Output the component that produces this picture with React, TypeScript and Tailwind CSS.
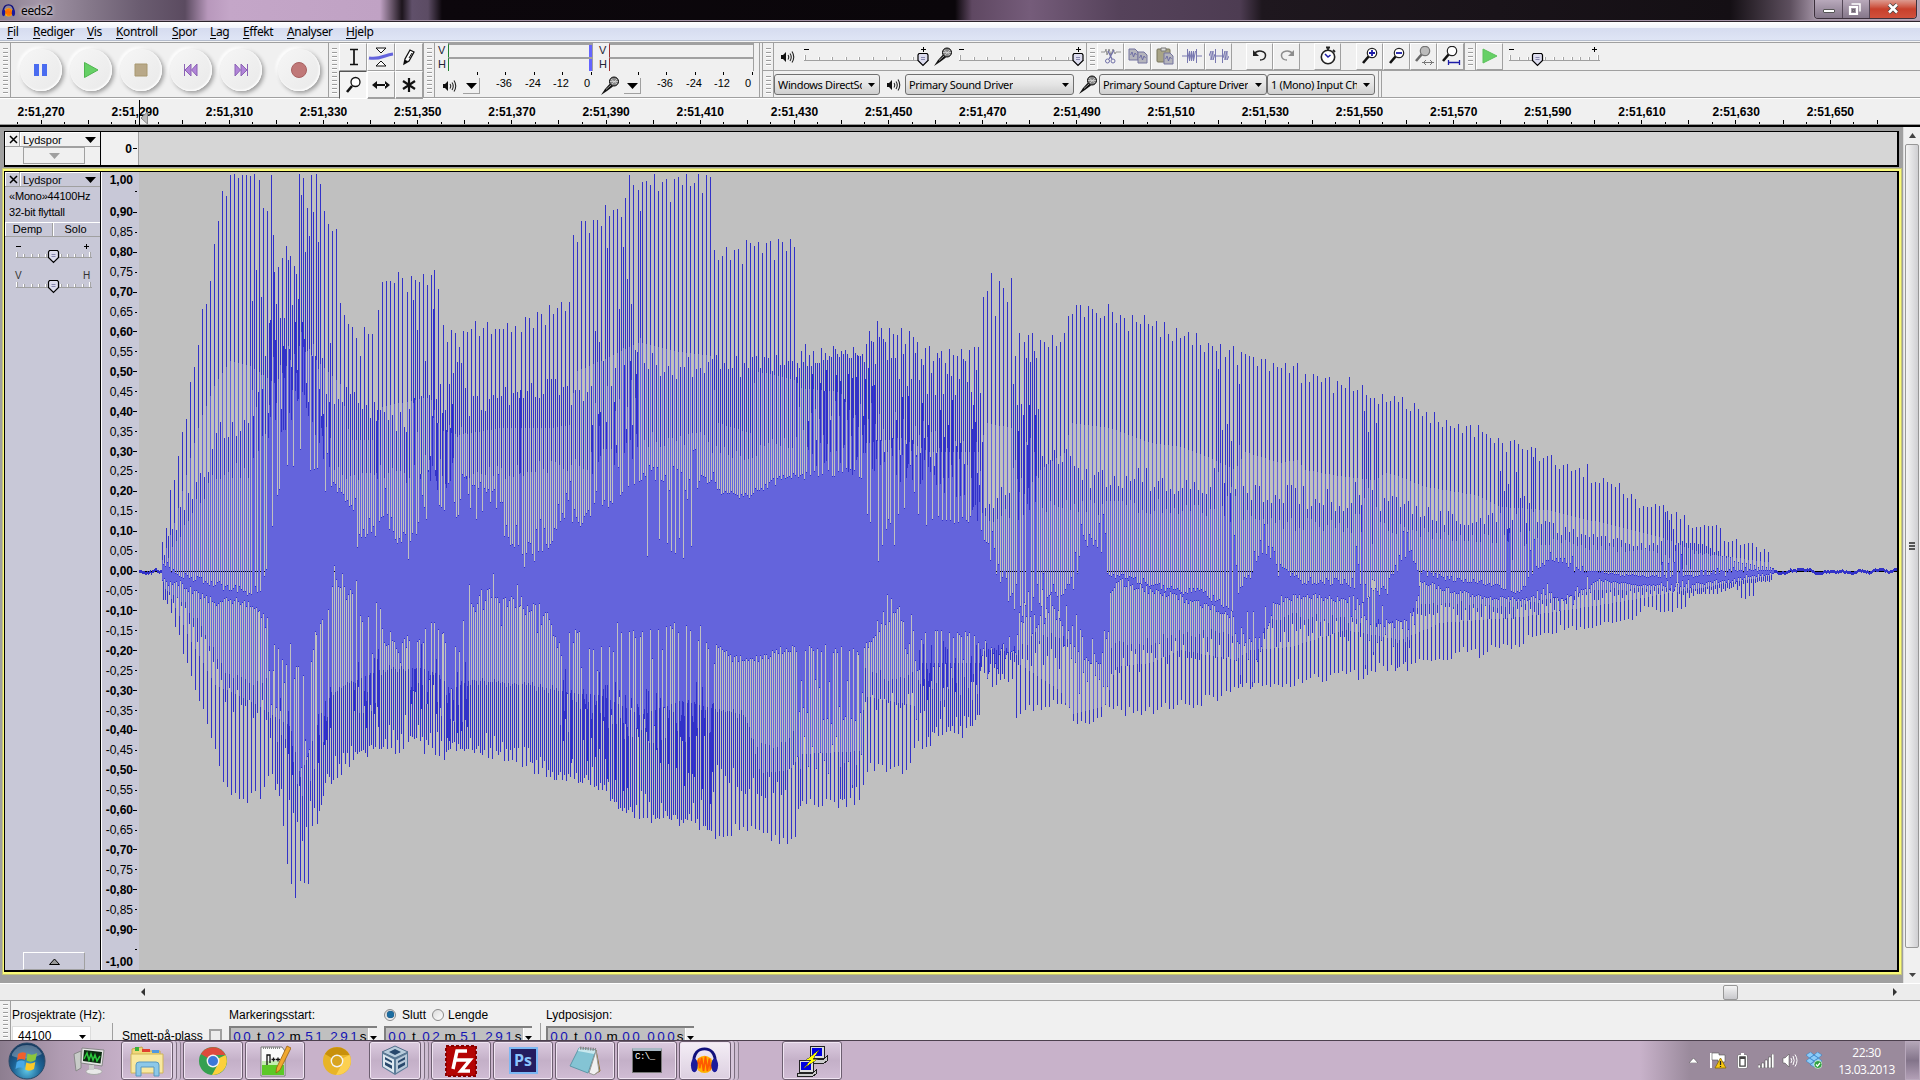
import React from "react";

type Pt = [number, number];
type Child = { children?: React.ReactNode };

const ZERO = 571;

/* Peak tops, one value for each 4px cycle, grouped by the x where a run starts. */
const PEAKS: { x: number; v: number[] }[] = [
  { x: 162, v: [542, 528, 490, 480, 456, 432, 419, 382, 367, 345, 309, 304, 281, 244, 221, 191, 196, 175, 174, 178, 175, 175, 176, 174] },
  { x: 259, v: [180, 208, 211, 175] },
  { x: 274, v: [272, 267, 258, 246, 256, 266] },
  { x: 299, v: [174, 178, 208] },
  { x: 311, v: [175] },
  { x: 316, v: [174, 184, 211, 224, 231] },
  { x: 336, v: [229, 303, 315, 324, 327, 338, 356, 327, 334, 334] },
  { x: 378, v: [310, 282, 281, 281, 283, 272, 278] },
  { x: 407, v: [292, 276, 280, 282, 274, 285, 275] },
  { x: 434, v: [270, 289] },
  { x: 443, v: [325, 342, 330, 333, 347, 331, 332, 329, 321, 336, 328, 322, 334, 329, 329, 329, 323, 332, 326] },
  { x: 521, v: [332, 317, 318, 328, 312, 314, 325, 305, 314, 308, 302, 311, 302, 235, 242, 221, 221, 233, 220, 220, 226, 205, 216, 210, 209] },
  { x: 621, v: [217, 198, 175, 185] },
  { x: 638, v: [190, 182, 181, 185, 174, 191, 182, 179, 202, 179, 177, 185, 174, 186, 183, 174, 193, 175, 177, 250, 260, 256, 247, 260, 250, 249, 264, 240, 243, 246, 242, 253, 243, 241, 260, 239, 242, 251, 239, 247] },
  { x: 797, v: [363, 351, 344, 355, 351, 363, 348, 353, 356, 346, 354, 351, 350, 358, 347] },
  { x: 858, v: [356, 354, 344] },
  { x: 869, v: [331, 342, 321, 328, 342, 328, 334, 335, 328, 344, 331, 337, 342, 359, 348, 346, 361, 353, 351, 363, 349, 355, 356, 349, 361, 350] },
  { x: 974, v: [347, 347] },
  { x: 983, v: [297, 291, 273, 316, 281, 288, 302, 278, 356, 333] },
  { x: 1024, v: [342, 335, 333, 358, 340, 342, 347, 335, 346, 342, 333, 316, 314, 305, 305, 317, 306, 309, 313, 318, 316, 304, 312, 323, 315, 318, 331, 315, 322, 324, 315, 324, 326, 321, 337, 322, 334, 341, 328, 338, 336, 332, 345, 333, 345, 352, 343, 346, 351, 344] },
  { x: 1225, v: [357, 350] },
  { x: 1233, v: [346, 365, 352, 354, 356, 357, 366, 359, 359, 371, 363, 367, 368, 363, 373, 366, 363, 383, 374, 382, 374, 376, 382, 378, 377, 393, 381, 385, 388, 377, 391, 390] },
  { x: 1362, v: [385, 395, 398, 398, 404, 394, 402, 401, 396, 402, 397, 409, 411, 403, 409, 416, 412, 423, 412, 422, 427, 420, 426, 428, 424, 433, 426, 425, 437, 425, 432, 434, 438, 443, 438, 443, 452, 441, 440, 444, 449] },
  { x: 1527, v: [450, 447, 448, 461, 458, 456, 455, 465, 469, 465, 464, 471, 470, 468, 477, 464, 483, 482, 483, 478, 482, 484, 487, 483, 494, 498, 494, 499, 508, 506, 507, 507, 504, 506, 505, 511, 514] },
  { x: 1676, v: [512, 519, 515, 525, 528, 527, 527, 525, 526, 526, 525, 528, 541, 542, 541, 539, 545, 544, 543, 543, 547, 552, 549, 552] },
];

/* Second-harmonic tops. */
const SECOND: Pt[] = [[162, 555], [180, 512], [200, 479], [210, 471], [215, 445], [220, 433], [232, 426], [250, 423], [255, 359], [260, 402], [270, 320], [280, 333], [290, 308], [300, 310], [310, 343], [318, 369], [322, 397], [340, 400], [350, 395], [365, 400], [375, 415], [395, 423], [410, 420], [415, 369], [420, 420], [436, 412], [445, 420], [455, 385], [465, 418], [475, 401], [500, 397], [530, 389], [560, 389], [572, 397], [600, 387], [615, 395], [625, 356], [640, 356], [660, 366], [680, 371], [700, 364], [715, 361], [740, 366], [760, 361], [790, 361], [797, 370], [830, 360], [860, 352], [870, 380], [900, 380], [920, 399], [940, 395], [975, 395], [981, 423], [985, 505], [1009, 495], [1012, 419], [1020, 419], [1035, 380], [1042, 452], [1070, 454], [1085, 476], [1120, 476], [1150, 481], [1180, 486], [1235, 490], [1250, 493], [1300, 497], [1350, 502], [1365, 500], [1400, 507], [1440, 517], [1500, 518], [1530, 525], [1550, 527], [1570, 533], [1600, 540], [1640, 545], [1700, 543], [1740, 563], [1773, 568]];
/* Upper end of the falling half cycles. */
const CORE_TOP: Pt[] = [[162, 560], [175, 573], [215, 584], [250, 592], [262, 586], [266, 563], [271, 528], [276, 499], [290, 458], [300, 450], [310, 471], [325, 471], [335, 486], [345, 497], [360, 532], [370, 536], [377, 520], [385, 515], [395, 535], [410, 545], [415, 522], [422, 512], [440, 512], [455, 497], [470, 486], [485, 494], [500, 499], [510, 542], [520, 548], [540, 548], [555, 537], [565, 497], [575, 522], [585, 520], [600, 502], [620, 494], [645, 474], [700, 471], [710, 476], [720, 490], [740, 498], [760, 490], [780, 478], [800, 476], [850, 471], [862, 476], [870, 529], [876, 562], [885, 524], [900, 529], [910, 481], [915, 514], [922, 524], [935, 519], [975, 520], [985, 543], [1000, 577], [1012, 577], [1020, 612], [1040, 603], [1055, 591], [1075, 581], [1083, 538], [1095, 543], [1103, 529], [1108, 577], [1120, 572], [1140, 581], [1180, 591], [1200, 592], [1235, 610], [1247, 570], [1260, 547], [1275, 556], [1282, 567], [1300, 580], [1345, 582], [1360, 590], [1385, 593], [1395, 570], [1405, 547], [1412, 556], [1418, 570], [1440, 577], [1480, 582], [1520, 592], [1535, 570], [1545, 563], [1565, 560], [1580, 570], [1620, 575], [1680, 577], [1740, 570], [1773, 570]];
/* Lower end of the rising half cycles. */
const CORE_BOTTOM: Pt[] = [[162, 583], [185, 586], [200, 596], [215, 603], [230, 600], [255, 606], [262, 618], [275, 650], [285, 660], [290, 650], [300, 675], [310, 670], [315, 634], [325, 609], [330, 583], [340, 588], [355, 599], [365, 629], [372, 590], [378, 600], [385, 645], [400, 645], [415, 637], [425, 627], [437, 632], [450, 650], [466, 650], [468, 583], [470, 614], [480, 594], [520, 604], [545, 614], [560, 650], [575, 634], [590, 645], [600, 648], [615, 634], [660, 636], [680, 629], [705, 639], [730, 658], [760, 658], [780, 651], [800, 648], [840, 649], [860, 653], [870, 643], [880, 620], [900, 610], [905, 643], [920, 634], [945, 634], [975, 636], [981, 648], [1000, 653], [1015, 648], [1020, 620], [1035, 622], [1045, 612], [1055, 615], [1070, 624], [1085, 643], [1100, 648], [1108, 600], [1115, 581], [1140, 588], [1180, 598], [1235, 616], [1247, 640], [1262, 640], [1275, 600], [1300, 596], [1345, 600], [1375, 602], [1390, 625], [1412, 625], [1420, 582], [1450, 590], [1480, 597], [1520, 600], [1535, 597], [1570, 597], [1600, 580], [1640, 586], [1700, 584], [1773, 574]];
/* Second-harmonic bottoms. */
const SECOND_BOTTOM: Pt[] = [[162, 588], [190, 619], [205, 650], [215, 675], [225, 696], [250, 708], [270, 708], [280, 716], [290, 770], [300, 798], [320, 793], [327, 777], [340, 762], [365, 747], [380, 742], [400, 726], [430, 729], [445, 742], [480, 744], [520, 757], [550, 767], [590, 772], [605, 782], [620, 801], [650, 801], [680, 806], [710, 811], [715, 777], [745, 782], [780, 792], [797, 763], [800, 715], [830, 730], [860, 730], [865, 696], [900, 706], [915, 691], [922, 700], [975, 700], [985, 663], [1015, 667], [1035, 653], [1070, 658], [1085, 667], [1140, 663], [1180, 649], [1230, 650], [1250, 643], [1300, 627], [1350, 633], [1380, 630], [1400, 617], [1450, 613], [1530, 613], [1560, 603], [1600, 595], [1700, 592], [1740, 585], [1773, 580]];
/* Deepest bottoms. */
const DEEP: Pt[] = [[162, 594], [175, 624], [184, 657], [192, 675], [200, 703], [208, 726], [215, 747], [219, 772], [227, 790], [240, 803], [252, 798], [265, 790], [270, 767], [280, 803], [285, 851], [290, 880], [293, 898], [297, 900], [300, 882], [308, 882], [312, 828], [320, 818], [325, 782], [340, 770], [350, 762], [365, 749], [396, 752], [412, 739], [425, 749], [442, 757], [452, 747], [465, 749], [490, 754], [510, 759], [530, 767], [560, 780], [590, 780], [605, 795], [625, 810], [645, 821], [680, 821], [703, 828], [719, 836], [735, 828], [760, 832], [782, 840], [795, 842], [797, 808], [810, 804], [862, 801], [864, 768], [900, 770], [913, 765], [915, 734], [925, 751], [935, 730], [955, 737], [970, 730], [980, 715], [983, 677], [1000, 686], [1012, 677], [1016, 713], [1035, 706], [1050, 701], [1065, 703], [1072, 722], [1097, 720], [1105, 710], [1150, 713], [1180, 703], [1192, 704], [1215, 697], [1235, 688], [1260, 688], [1275, 683], [1294, 690], [1300, 678], [1330, 680], [1345, 673], [1365, 677], [1380, 665], [1395, 668], [1411, 668], [1420, 657], [1450, 657], [1470, 648], [1480, 655], [1490, 647], [1520, 647], [1525, 637], [1550, 635], [1560, 628], [1590, 627], [1610, 622], [1635, 618], [1645, 607], [1665, 612], [1685, 607], [1690, 595], [1720, 593], [1735, 585], [1742, 600], [1753, 595], [1757, 582], [1773, 582]];
/* RMS limits. */
const RMS_PEAK: Pt[] = [[162, 560], [175, 520], [190, 458], [200, 420], [215, 384], [230, 361], [250, 366], [275, 384], [300, 344], [325, 369], [340, 384], [350, 440], [375, 440], [380, 407], [430, 397], [440, 430], [460, 435], [500, 428], [550, 428], [570, 425], [575, 372], [600, 361], [640, 342], [680, 352], [710, 356], [718, 423], [750, 433], [755, 371], [795, 380], [800, 388], [840, 392], [866, 443], [900, 438], [930, 452], [980, 452], [985, 423], [1011, 428], [1020, 500], [1040, 470], [1065, 452], [1070, 423], [1110, 428], [1150, 443], [1180, 447], [1215, 460], [1235, 470], [1245, 452], [1280, 463], [1297, 460], [1305, 470], [1345, 477], [1375, 480], [1385, 473], [1400, 477], [1425, 487], [1475, 495], [1500, 507], [1545, 510], [1575, 517], [1620, 527], [1660, 537], [1700, 553], [1773, 563]];
const RMS_SECOND: Pt[] = [[162, 562], [200, 500], [215, 471], [250, 471], [262, 440], [280, 420], [300, 400], [320, 440], [335, 471], [435, 476], [520, 471], [600, 460], [650, 440], [700, 440], [730, 457], [790, 440], [810, 450], [860, 462], [930, 471], [985, 520], [1040, 507], [1180, 507], [1200, 513], [1240, 513], [1300, 525], [1380, 527], [1450, 537], [1530, 540], [1600, 548], [1700, 553], [1773, 566]];
const RMS_DEEP: Pt[] = [[162, 580], [190, 640], [215, 685], [250, 701], [290, 726], [300, 777], [325, 701], [345, 685], [380, 670], [420, 668], [440, 675], [450, 690], [470, 680], [530, 685], [570, 693], [600, 695], [640, 715], [680, 701], [745, 715], [760, 773], [790, 770], [800, 754], [860, 751], [864, 696], [915, 706], [920, 663], [980, 663], [985, 648], [1015, 653], [1020, 665], [1060, 691], [1070, 715], [1105, 706], [1115, 667], [1150, 663], [1180, 650], [1235, 660], [1250, 650], [1290, 647], [1345, 630], [1400, 640], [1440, 623], [1520, 617], [1600, 605], [1700, 588], [1773, 575]];
/* Ranges where neighbouring cycles beat against each other. */
const BEAT_UP: Pt[] = [[252, 330], [412, 466], [590, 640], [797, 980], [1012, 1040], [1212, 1242], [1355, 1378], [1500, 1535], [1660, 1690]];
const BEAT_DOWN: Pt[] = [[268, 330], [352, 380], [410, 470], [560, 712], [797, 862], [915, 980], [1068, 1108], [1235, 1262], [1362, 1412]];
const NOTCHES: Pt[] = [[395, 420], [646, 700], [868, 895], [1083, 1106]];
/* Ranges where the edge of the core stays even. */
const EVEN: Pt[] = [[162, 262], [296, 322], [620, 646], [715, 866], [930, 975], [1112, 1235], [1280, 1350], [1420, 1525], [1590, 1660]];

function at(p: Pt[], x: number) {
  if (x <= p[0][0]) return p[0][1];
  for (let i = 1; i < p.length; i++) {
    if (x <= p[i][0]) {
      const [x0, y0] = p[i - 1];
      const [x1, y1] = p[i];
      return y0 + ((y1 - y0) * (x - x0)) / (x1 - x0);
    }
  }
  return p[p.length - 1][1];
}
const inside = (r: Pt[], x: number) => r.some(([a, b]) => x >= a && x <= b);

function buildWave() {
  let seed = 7;
  const rnd = () => {
    seed = (seed * 1103515245 + 12345) % 2147483648;
    return seed / 2147483648;
  };
  const cycles: Pt[] = PEAKS.flatMap((g) => g.v.map((y, i): Pt => [g.x + i * 4, y]));
  let dark = "";
  let light = "";
  const bar = (x: number, a: number, b: number) => `M${x}.5 ${Math.round(a)}V${Math.max(Math.round(b), Math.round(a) + 1)}`;
  let drift = 0;
  let c = 0;
  for (let x = 139; x < 1897; x++) {
    if (x < 162 || x > 1773) {
      drift = Math.max(-2.4, Math.min(2.4, drift + (rnd() - 0.5) * 2.8)) * 0.93;
      dark += bar(x, ZERO - 1 + drift, ZERO + 2 + drift);
      continue;
    }
    while (c + 1 < cycles.length && cycles[c + 1][0] <= x) c++;
    const [cx, peak] = cycles[c];
    const k = x - cx;
    const amp = Math.min(1, (1800 - x) / 500);
    const j = (n: number) => (rnd() - 0.5) * n * amp;
    const beatUp = inside(BEAT_UP, x);
    const beatDown = inside(BEAT_DOWN, x);
    const rag = inside(EVEN, x) ? 8 : rnd() < 0.35 ? 60 : 16;
    const second = Math.max(at(SECOND, x), peak);
    let top = at(CORE_TOP, x) + j(rag);
    let bottom = at(CORE_BOTTOM, x) + j(rag);
    let lo: number;
    let hi: number;
    if (k === 0 || k === 2 || k > 3) {
      top = k === 0 ? peak : second + j(24);
      lo = k === 0 ? at(RMS_PEAK, x) : at(RMS_SECOND, x) + j(16);
      if (k === 2 && beatUp) {
        top = second - Math.pow(rnd(), 1.5) * (second - peak) * 0.9;
        lo = (at(RMS_SECOND, x) + top) / 2 + 20 + j(50);
      }
      hi = bottom - 1;
      if (beatDown && rnd() < (k === 2 ? 0.75 : 0.35)) {
        const limit = at(SECOND_BOTTOM, x);
        const rms = at(RMS_DEEP, x) + j(50);
        bottom = limit - rnd() * (limit - bottom) * 0.6;
        hi = Math.min(bottom - 1, rms);
      }
    } else {
      const secondBottom = at(SECOND_BOTTOM, x);
      bottom = k === 1 ? at(DEEP, x) + j(12) : secondBottom + j(26);
      hi = k === 1 ? at(RMS_DEEP, x) : Math.min(at(RMS_DEEP, x), ZERO + (secondBottom - ZERO) * 0.8) + j(10);
      lo = top + 1;
      if (inside(NOTCHES, x) && k === 1 && rnd() < 0.6) top = Math.max(top, ZERO - 10 - rnd() * 30);
      const rise = x > 1000 ? 0.22 : k === 3 ? 0.75 : 0.4;
      if (beatUp && rnd() < rise) {
        top = second + rnd() * 80 * amp;
        lo = at(RMS_SECOND, x) + j(30);
      }
      if (k === 3 && beatDown) {
        bottom += rnd() * (at(DEEP, x) - bottom);
        hi = Math.max(hi, at(RMS_DEEP, x) + rnd() * 40 * amp);
      }
      lo = Math.max(lo, top + 1);
    }
    dark += bar(x, top, bottom);
    lo = Math.max(lo, top + 1);
    hi = Math.min(hi, bottom - 1);
    if (hi > lo) light += bar(x, lo, hi);
  }
  return { dark, light };
}

const wave = buildWave();

const Waveform = () => (
  <svg className="block h-[798px] w-[1758px] bg-[#c0c0c0]" viewBox="139 172 1758 798" shapeRendering="crispEdges">
    <path d="M139 571.5H1897" stroke="#000" />
    <path d={wave.dark} stroke="#3232c8" />
    <path d={wave.light} stroke="#6464dc" />
  </svg>
);

const Grip = ({ h }: { h: number }) => (
  <div className="flex w-[11px] shrink-0 flex-col items-center justify-center gap-[3px] border-r border-[#a0a0a0] bg-[#f0f0f0]">
    {Array.from({ length: h }, (_, i) => (
      <div key={i} className="h-px w-[5px] bg-[#9c9c9c] shadow-[0_1px_0_#fff]" />
    ))}
  </div>
);

const Speaker = () => (
  <svg className="h-[14px] w-[15px] shrink-0" viewBox="0 0 15 14">
    <path d="M1 5H3L6 2V12L3 9H1Z" fill="#111" />
    <path d="M8 5Q9.500 7 8 9.500M10 3.500Q12.500 7 10 11M12 1.500Q15.500 7 12 12.500" fill="none" stroke="#222" strokeWidth="1.100" />
  </svg>
);

const Mic = () => (
  <svg className="h-[20px] w-[20px] shrink-0" viewBox="0 0 20 20">
    <path d="M1 19L5 13L10 7.500L13 10.500L7 15Z" fill="#111" />
    <path d="M6 13.500L11 9" stroke="#999" strokeWidth="1" />
    <circle cx="14" cy="5.500" r="4.500" fill="#888" stroke="#000" />
    <path d="M11 3L17 8M12 8L17 3M10 5.500H18" stroke="#ddd" strokeWidth=".7" />
  </svg>
);

const Slider = ({ w, pos, ticks, letters }: { w: number; pos: number; ticks: number; letters?: boolean }) => (
  <svg width={w} height="24" viewBox={`0 0 ${w} 24`} className="block shrink-0 overflow-visible">
    {letters ? (
      <g fontFamily="Liberation Sans" fontSize="10" fill="#333">
        <text x="0" y="8">V</text>
        <text x={w - 9} y="8">H</text>
      </g>
    ) : (
      <path d={`M1 5.500H6M${w - 8} 5.500H${w - 3}M${w - 5.5} 3V8`} stroke="#000" shapeRendering="crispEdges" />
    )}
    <g shapeRendering="crispEdges">
      {Array.from({ length: ticks }, (_, i) => {
        const x = Math.round(1 + (i * (w - 4)) / (ticks - 1));
        const y = i === 0 || i === ticks - 1 ? 11 : 13;
        return (
          <g key={i}>
            <path d={`M${x + 0.5} ${y}V16`} stroke="#fff" />
            <path d={`M${x + 1.5} ${y}V16`} stroke="#a5a5a5" />
          </g>
        );
      })}
      <path d={`M1 16.500H${w}`} stroke="#a0a0a0" />
    </g>
    <path d={`M${pos - 4} 9.500H${pos + 4}L${pos + 5} 11V16.500L${pos} 21.500L${pos - 5} 16.500V11Z`} fill="#dcdcee" stroke="#000" strokeWidth="1.200" />
    <path d={`M${pos - 2} 13.500H${pos + 2}M${pos - 2} 15.500H${pos + 2}`} stroke="#8888b0" />
  </svg>
);

const Cell = ({ children, down }: Child & { down?: boolean }) => (
  <div
    className={
      down
        ? "flex h-[28px] w-[28px] items-center justify-center border border-t-[#555] border-r-[#fff] border-b-[#fff] border-l-[#555] bg-[#f4f4f4]"
        : "flex h-[28px] w-[28px] items-center justify-center border border-t-[#fff] border-r-[#a0a0a0] border-b-[#a0a0a0] border-l-[#fff]"
    }
  >
    {children}
  </div>
);

const EditBtn = ({ children }: Child) => (
  <div className="flex h-[27px] w-[27px] shrink-0 items-center justify-center border border-t-[#fff] border-r-[#a0a0a0] border-b-[#a0a0a0] border-l-[#fff] pb-px">
    <svg width="20" height="20" viewBox="0 0 20 20" fill="none">
      {children}
    </svg>
  </div>
);

const Combo = ({ text, className }: { text: string; className: string }) => (
  <div
    className={
      "flex h-[21px] shrink-0 items-center justify-between rounded-[3px] border border-[#707070] bg-gradient-to-b from-[#f2f2f2] via-[#e4e4e4] to-[#cfcfcf] pr-[4px] pl-[3px] " +
      className
    }
  >
    <span className="overflow-hidden font-['Noto_Sans',sans-serif] text-[11px] leading-[18px] tracking-[-0.35px] whitespace-nowrap text-black">{text}</span>
    <svg className="ml-[6px] h-[4px] w-[7px] shrink-0" viewBox="0 0 7 4">
      <path d="M0 0H7L3.500 4Z" />
    </svg>
  </div>
);

const Transport = ({ children }: Child) => (
  <div className="flex h-[42px] w-[42px] shrink-0 items-center justify-center rounded-full bg-gradient-to-br from-[#f6f6f6] to-[#e9e9e9] shadow-[2px_2px_4px_#9a9a9a,-2px_-2px_3px_#fff,inset_-1px_-1px_2px_#fff]">
    <svg width="18" height="18" viewBox="0 0 18 18">
      {children}
    </svg>
  </div>
);

const Meter = ({ rec }: { rec?: boolean }) => (
  <div className="flex h-[54px] w-[161px] shrink-0 flex-col">
    {["V", "H"].map((c) => (
      <div key={c} className="flex h-[14px] items-center">
        <span className="w-[13px] pl-[3px] text-[11px] leading-[14px] text-[#223]">{c}</span>
        <div className={"flex h-[14px] w-[145px] justify-end border-t-2 border-r border-l border-t-[#a0a0a0] border-r-[#a0a0a0] " + (rec ? "border-l-[#a03030]" : "border-l-[#208030]")}>
          <div className={rec ? "w-0" : "w-[3px] bg-[#6464ff]"} />
        </div>
      </div>
    ))}
    <svg className="block h-[4px] w-[161px]" shapeRendering="crispEdges">
      <path d="M42.500 1V4M70.500 1V4M99.500 1V4M127.500 1V4M156.500 1V4" stroke="#000" />
    </svg>
    <div className="flex h-[20px] items-center text-[11px] leading-[12px]">
      <div className="flex w-[28px] justify-center pt-[2px]">{rec ? <Mic /> : <Speaker />}</div>
      <div className="mt-[2px] flex h-[16px] w-[17px] items-center justify-center border-r border-b border-[#a0a0a0]">
        <svg width="11" height="6">
          <path d="M0 0H11L5.500 6Z" />
        </svg>
      </div>
      <div className="flex -translate-y-[2px] pl-[3px]">
        <span className="w-[29px] text-right">-36</span>
        <span className="w-[29px] text-right">-24</span>
        <span className="w-[28px] text-right">-12</span>
        <span className="w-[21px] text-right">0</span>
      </div>
    </div>
  </div>
);

const Rev = <path d="M2.500 3V15M9 3V15L3 9ZM15 3V15L9.500 9Z" fill="#b184d8" stroke="#8b62b4" strokeWidth="1" />;

const menus = [
  ["Fil", "w-[26px]"],
  ["Rediger", "w-[54px]"],
  ["Vis", "w-[29px]"],
  ["Kontroll", "w-[56px]"],
  ["Spor", "w-[38px]"],
  ["Lag", "w-[33px]"],
  ["Effekt", "w-[44px]"],
  ["Analyser", "w-[59px]"],
  ["Hjelp", "w-[40px]"],
];

const Clip = ({ x }: { x: number }) => (
  <g transform={`translate(${x} 0)`}>
    <path d="M0 3H6L9 6V14H0Z" fill="#b4b4bc" stroke="#7474a0" />
    <path d="M1.500 9L3 6L4.500 11L6 7L7.500 9" stroke="#6060a0" strokeWidth=".8" />
  </g>
);

const Lens = ({ fill = "#fff", mark }: { fill?: string; mark?: React.ReactNode }) => (
  <>
    <path d="M9 10L3 17" stroke="#111" strokeWidth="2.600" />
    <circle cx="12" cy="7" r="4.700" fill={fill} stroke="#222" strokeWidth="1.200" />
    {mark}
  </>
);

function Toolbars() {
  return (
    <div className="flex h-[56px] border-t border-[#a0a0a0] bg-[#f0f0f0] font-['Liberation_Sans',Arial,sans-serif]">
      <div className="flex w-[329px] border-r border-b border-[#a0a0a0]">
        <Grip h={12} />
        <div className="flex items-center gap-[8px] pl-[9px]">
          <Transport><path d="M2 3H7V15H2ZM10 3H15V15H10Z" fill="#4a6cf0" /></Transport>
          <Transport><path d="M2.500 1.500L16 9L2.500 16.500Z" fill="#66d066" stroke="#4fb54f" /></Transport>
          <Transport><path d="M3 3H15V15H3Z" fill="#b8a888" stroke="#a89870" /></Transport>
          <Transport>{Rev}</Transport>
          <Transport><g transform="matrix(-1 0 0 1 18 0)">{Rev}</g></Transport>
          <div className="ml-[8px]">
            <Transport><circle cx="9" cy="9" r="7.500" fill="#c07878" stroke="#a86060" /></Transport>
          </div>
        </div>
      </div>
      <div className="flex w-[94px] border-b border-[#a0a0a0]">
        <Grip h={12} />
        <div className="-ml-px grid w-[84px] shrink-0 grid-cols-3">
          <Cell>
            <svg width="12" height="18"><path d="M3 1.500H11M3 16.500H11M7 2V16" stroke="#111" strokeWidth="1.700" /></svg>
          </Cell>
          <Cell>
            <svg width="26" height="22" className="shrink-0"><path d="M1 12C12 14 16 9 25 8" stroke="#6464dc" strokeWidth="3" fill="none" /><path d="M8 2H18L13 7ZM8 20H18L13 15Z" fill="#fff" stroke="#111" /></svg>
          </Cell>
          <Cell>
            <svg width="14" height="18"><path d="M2 16L3 11L8 2L12 4L7 13Z" fill="#fff" stroke="#111" strokeWidth="1.300" /><path d="M2 16L3 12L6 13Z" /><path d="M7 10L10 5" stroke="#111" /></svg>
          </Cell>
          <Cell down>
            <svg width="18" height="18"><path d="M8 10L3 16" stroke="#111" strokeWidth="2.600" /><circle cx="11.500" cy="6" r="4.500" fill="#fff" stroke="#111" strokeWidth="1.300" /></svg>
          </Cell>
          <Cell>
            <svg width="18" height="10"><path d="M0 5L5 1V9ZM18 5L13 1V9ZM4 4H14V6H4Z" fill="#111" /></svg>
          </Cell>
          <Cell>
            <svg width="14" height="16"><path d="M7 1V15M1 4L13 12M13 4L1 12" stroke="#111" strokeWidth="2.200" /></svg>
          </Cell>
        </div>
      </div>
      <div className="flex w-[340px] border-x border-b border-[#a0a0a0]">
        <Grip h={12} />
        <Meter />
        <Meter rec />
        <div className="w-[3px] border-r border-[#a0a0a0]" />
      </div>
      <div className="flex flex-1 flex-col">
        <div className="flex h-[28px] border-b border-[#a0a0a0]">
          <Grip h={5} />
          <div className="flex w-[313px] items-center border-r border-[#a0a0a0] pl-[4px]">
            <div className="w-[25px] pl-[2px]"><Speaker /></div>
            <div className="-mt-px"><Slider w={126} pos={120} ticks={10} /></div>
            <div className="w-[29px] pl-[4px]"><Mic /></div>
            <div className="-mt-px"><Slider w={126} pos={120} ticks={10} /></div>
          </div>
          <Grip h={5} />
          <div className="-ml-px flex">
            <EditBtn><path d="M0 6H4L5 3L6 9L8 3L10 9L12 3L14 8L15 6H20" stroke="#888" strokeWidth=".9" /><path d="M13 4L8 13M7 5L11 13" stroke="#7070a8" strokeWidth="1.300" /><circle cx="6.500" cy="15" r="2" stroke="#7070a8" /><circle cx="12" cy="15" r="2" stroke="#7070a8" /></EditBtn>
            <EditBtn><Clip x={1} /><g transform="translate(0 3)"><Clip x={10} /></g></EditBtn>
            <EditBtn><rect x="2" y="3" width="13" height="13" rx="1" fill="#a8a486" stroke="#77745c" /><path d="M6 2H11V5H6Z" fill="#ddd" stroke="#777" /><g transform="translate(0 4)"><Clip x={9} /></g></EditBtn>
            <EditBtn><path d="M0 10H5M15 10H20M5.500 3V17M14.500 3V17M5.500 14L7.500 5V15L9.500 5V15L11.500 5V15L13.500 5" stroke="#7878b0" /></EditBtn>
            <EditBtn><path d="M0 10L2 5V14L4 5V14L6 8M6.500 3V17M6.500 10H13M13.500 3V17M14 12L16 5V14L18 5V14L20 10" stroke="#7878b0" /></EditBtn>
            <div className="w-[14px]" />
            <EditBtn><path d="M4 8C8 3 16 5 15.500 10C15 13 12 14 10 14" stroke="#222" strokeWidth="1.500" /><path d="M3 4V10H9Z" fill="#222" /></EditBtn>
            <EditBtn><path d="M16 8C12 3 4 5 4.500 10C5 13 8 14 10 14" stroke="#8c8c8c" strokeWidth="1.500" /><path d="M17 4V10H11Z" fill="#8c8c8c" /></EditBtn>
            <div className="w-[14px]" />
            <EditBtn><circle cx="10" cy="11" r="6.700" fill="#fff" stroke="#222" strokeWidth="1.600" /><path d="M8 1.500H12M10 2V5M15 4L17 6" stroke="#222" strokeWidth="1.800" /><path d="M7 8L10 11L12.500 9" stroke="#1c1ca8" strokeWidth="1.500" /></EditBtn>
            <div className="w-[15px]" />
            <EditBtn><Lens mark={<path d="M9 7H15M12 4V10" stroke="#1c1ca8" strokeWidth="1.800" />} /></EditBtn>
            <EditBtn><Lens mark={<path d="M9 7H15" stroke="#1c1ca8" strokeWidth="1.800" />} /></EditBtn>
            <EditBtn><g opacity=".6"><g transform="translate(-1 -2)"><Lens fill="#999" /></g></g><path d="M8 16.500H20M12 14L9.500 16.500L12 19M16 14L18.500 16.500L16 19" stroke="#777" /></EditBtn>
            <EditBtn><g transform="translate(-1 -2)"><Lens /></g><path d="M7.500 16.500H18.500M7.500 14V19M18.500 14V19" stroke="#1c1ca8" strokeWidth="1.300" /></EditBtn>
          </div>
          <div className="flex border-l border-[#a0a0a0]">
            <Grip h={5} />
            <EditBtn><path d="M3 3L17 10L3 17Z" fill="#66d066" stroke="#5cc25c" /></EditBtn>
            <div className="pt-px pl-[5px]"><Slider w={92} pos={29.5} ticks={11} /></div>
          </div>
        </div>
        <div className="flex h-[28px] border-b border-[#a0a0a0]">
          <Grip h={5} />
          <div className="flex w-[605px] items-center border-r border-[#a0a0a0] pt-px">
            <Combo text="Windows DirectSo" className="w-[106px]" />
            <div className="pr-[4px] pl-[6px]"><Speaker /></div>
            <Combo text="Primary Sound Driver" className="w-[169px]" />
            <div className="w-[25px] pl-[4px]"><Mic /></div>
            <Combo text="Primary Sound Capture Driver" className="w-[168px]" />
            <Combo text="1 (Mono) Input Ch" className="w-[108px]" />
          </div>
          <div className="w-[3px] border-r border-[#a0a0a0]" />
        </div>
      </div>
    </div>
  );
}

function TimeRuler() {
  return (
    <div className="relative h-[28px] overflow-hidden border-b-2 border-black bg-[#f0f0f0] font-['Liberation_Sans',Arial,sans-serif]">
      <div className="ml-[-6px] flex h-[20px] pt-[7px]">
        {Array.from({ length: 20 }, (_, i) => (
          <div key={i} className="w-[94.180px] shrink-0 text-center text-[12px] leading-[13px] font-bold text-black">{`2:51,${270 + i * 20}`}</div>
        ))}
      </div>
      <svg className="block h-[6px] w-[1920px]" shapeRendering="crispEdges">
        {Array.from({ length: 80 }, (_, i) => (
          <path key={i} d={`M${Math.floor(17.5 + i * 23.54) + 0.5} ${i % 2 ? 1 : 3}V5`} stroke="#000" />
        ))}
        <path d="M0 5.500H1920" stroke="#999" />
      </svg>
      <svg className="absolute top-[1px] left-[138px]" width="12" height="26">
        <path d="M1.500 0V26" stroke="#000" />
        <path d="M9.500 12V24L3 18Z" fill="#bbb" stroke="#888" />
      </svg>
    </div>
  );
}

const TrackHead = () => (
  <div className="flex h-[15px] border-b border-[#a0a0a0] text-[11px] leading-[14px]">
    <div className="flex w-[15px] items-center justify-center border-t border-l border-[#fff]">
      <svg width="9" height="9"><path d="M1 1L8 8M8 1L1 8" stroke="#000" strokeWidth="1.500" /></svg>
    </div>
    <div className="flex flex-1 items-center justify-between border-t border-l border-[#fff] pr-[4px] pl-[2px] shadow-[-1px_0_0_#a0a0a0]">
      <span className="pt-px">Lydspor</span>
      <svg width="11" height="6"><path d="M0 0H11L5.500 6Z" /></svg>
    </div>
  </div>
);

function LevelRuler() {
  const rows = Array.from({ length: 37 }, (_, i) => 90 - i * 5);
  const fmt = (v: number) => `${v < 0 ? "-" : ""}0,${String(Math.abs(v)).padStart(2, "0")}`;
  return (
    <div className="flex w-[38px] flex-col border-l border-[#fff] bg-[#c8c8d7] text-right text-[12px] leading-[14px]">
      <div className="h-[30.500px] pt-px pr-[6px] font-bold">
        1,00
        <div className="mt-[4px] mr-[-4px] ml-auto h-px w-[2px] bg-black" />
      </div>
      {rows.map((v, i) => (
        <div key={v} className={"flex h-[19.930px] shrink-0 items-center justify-end pr-[2px] " + (i % 2 ? "" : "font-bold")}>
          <span className={i % 2 ? "pr-[2px]" : ""}>{fmt(v)}</span>
          <div className={i % 2 ? "h-px w-[2px] bg-black" : "h-px w-[4px] bg-black"} />
        </div>
      ))}
      <div className="mt-[9px] mr-[2px] ml-auto h-px w-[2px] bg-black" />
      <div className="pt-[5px] pr-[6px] font-bold">-1,00</div>
    </div>
  );
}

function Tracks() {
  return (
    <div className="flex h-[856px] bg-[#a0a0a0] font-['Liberation_Sans',Arial,sans-serif] text-black">
      <div className="w-[1903px]">
        <div className="mt-[4px] ml-[4px] flex h-[36px] w-[1895px] border-t border-r-2 border-b-2 border-l border-black">
          <div className="w-[96px] border-r border-black bg-[#f0f0f0]">
            <TrackHead />
            <div className="mr-[15px] ml-[18px] flex h-[17px] items-center justify-center border border-[#a0a0a0] bg-[#f0f0f0]">
              <svg width="11" height="6"><path d="M0 0H11L5.500 6Z" fill="#a0a0a0" /></svg>
            </div>
          </div>
          <div className="flex w-[38px] items-center justify-end border-r border-[#a0a0a0] bg-[#f0f0f0] text-[12px] font-bold">
            0<div className="mx-px h-px w-[4px] bg-black" />
          </div>
          <div className="flex-1 bg-[#d6d6d6]" />
        </div>
        <div className="mt-[1px] ml-[2px] w-[1900px] border border-[#c4c478]">
          <div className="border-t-2 border-r-2 border-b-2 border-l border-[#fafa78]">
            <div className="flex h-[801px] border-t border-r-2 border-b-2 border-black">
              <div className="flex w-[97px] flex-col border-x border-black bg-[#c8c8d7]">
                <TrackHead />
                <div className="pt-px pl-[4px] text-[11px] leading-[16px] tracking-[-0.2px]">
                  <div>«Mono»44100Hz</div>
                  <div>32-bit flyttall</div>
                </div>
                <div className="mt-[2px] flex h-[15px] border-y border-t-[#fff] border-b-[#a0a0a0] text-center text-[11px] leading-[13px]">
                  <div className="flex-1 border-x border-l-[#fff] border-r-[#a0a0a0] pr-[3px]">Demp</div>
                  <div className="flex-1 border-l border-[#fff] pr-[3px]">Solo</div>
                </div>
                <div className="pt-[4px] pl-[10px]"><Slider w={77} pos={38.5} ticks={11} /></div>
                <div className="pt-[6px] pl-[10px]"><Slider w={77} pos={38.5} ticks={11} letters /></div>
                <div className="mt-auto mr-[15px] ml-[18px] flex h-[18px] items-center justify-center border border-t-[#fff] border-r-[#a0a0a0] border-b-[#a0a0a0] border-l-[#fff]">
                  <svg width="11" height="7"><path d="M.5 6.500H10.500L5.500 1Z" fill="#999" stroke="#000" /></svg>
                </div>
              </div>
              <LevelRuler />
              <Waveform />
            </div>
          </div>
        </div>
      </div>
      <div className="flex w-[17px] flex-col items-center border-l border-[#ddd] bg-[#f0f0f0]">
        <svg className="my-[6px]" width="7" height="5"><path d="M0 5H7L3.500 0Z" fill="#444" /></svg>
        <div className="flex h-[804px] w-[14px] flex-col items-center justify-center gap-px rounded-[2px] border border-[#979797] bg-gradient-to-r from-[#f5f5f5] to-[#cfcfd2]">
          <div className="h-[2px] w-[6px] bg-[#555]" />
          <div className="h-[2px] w-[6px] bg-[#555]" />
          <div className="h-[2px] w-[6px] bg-[#555]" />
        </div>
        <svg className="mt-auto mb-[6px]" width="7" height="4"><path d="M0 0H7L3.500 4Z" fill="#444" /></svg>
      </div>
    </div>
  );
}

const cellWidth = (c: string) => {
  if (c === "t") return "w-[14px] text-black";
  if (c === "m") return "w-[18px] text-black";
  if (c === "s") return "w-[8px] text-black";
  return c === " " ? "w-[5px]" : "w-[10px]";
};

const TimeBox = ({ value }: { value: string[] }) => (
  <div className="flex h-[28px] w-[148px] border-t-2 border-l-2 border-[#808080] bg-[#c0c0c0] pt-px text-[13.500px] leading-[16px]">
    <div className="flex w-[137px] shrink-0 pl-px text-center text-[#1414b4]">
      {value.map((c, i) => (
        <span key={i} className={"shrink-0 " + cellWidth(c)}>{c}</span>
      ))}
    </div>
    <div className="-mt-px flex h-[20px] w-[9px] items-center justify-center border-l border-[#fff] bg-[#f0f0f0]">
      <svg width="7" height="4"><path d="M0 0H7L3.500 4Z" /></svg>
    </div>
  </div>
);

const Radio = ({ on }: { on?: boolean }) => (
  <div className="flex h-[12px] w-[12px] shrink-0 items-center justify-center rounded-full border border-[#8a8a8a] bg-gradient-to-br from-[#dcdcdc] to-white">
    {on && <div className="h-[7px] w-[7px] rounded-full bg-[#1c6ca0] shadow-[0_0_1px_#024]" />}
  </div>
);

function SelectionBar() {
  return (
    <div className="flex h-[40px] overflow-hidden border-t border-[#a0a0a0] bg-[#f0f0f0] font-['Liberation_Sans',Arial,sans-serif] text-[12px] leading-[14px] text-black">
      <Grip h={9} />
      <div className="w-[101px] pt-[7px] pl-px whitespace-nowrap">
        Prosjektrate (Hz):
        <div className="mt-[4px] flex h-[24px] w-[79px] items-start justify-between border border-[#ddd] bg-white px-[5px] pt-[2px]">
          44100
          <svg className="mt-[6px] mr-[-1px]" width="7" height="4"><path d="M0 0H7L3.500 4Z" /></svg>
        </div>
      </div>
      <div className="mt-[22px] flex w-[117px] border-l border-[#a0a0a0] pt-[6px] pl-[9px] whitespace-nowrap">
        Smett-på-plass
        <div className="mt-0 ml-[6px] h-[13px] w-[13px] shrink-0 border-2 border-[#a0a0a0] bg-[#ececec]" />
      </div>
      <div className="w-[155px] pt-[7px]">
        Markeringsstart:
        <div className="mt-[4px]"><TimeBox value={[..."00t02m51", " ", ..."291s"]} /></div>
      </div>
      <div className="w-[156px]">
        <div className="flex h-[20px] items-center gap-[8px] pt-[7px]">
          <Radio on />
          <span className="-ml-[2px] mr-[-2px]">Slutt</span>
          <Radio />
          <span className="-ml-[4px]">Lengde</span>
        </div>
        <div className="mt-[5px]"><TimeBox value={[..."00t02m51", " ", ..."291s"]} /></div>
      </div>
      <div className="mt-[22px] w-[6px] border-l border-[#a0a0a0]" />
      <div className="w-[155px] pt-[7px]">
        Lydposisjon:
        <div className="mt-[4px]"><TimeBox value={[..."00t00m00", " ", ..."000s"]} /></div>
      </div>
    </div>
  );
}

const Audacity = ({ size }: { size: number }) => (
  <svg width={size} height={size} viewBox="0 0 32 32">
    <ellipse cx="16" cy="20" rx="9" ry="9" fill="#ffb400" />
    <path d="M8 20L10 16L11 24L13 13L15 27L17 12L19 27L21 14L22 24L24 20" fill="none" stroke="#ff5a00" strokeWidth="1.800" />
    <path d="M5 20C4 8 10 4 16 4S28 8 27 20" fill="none" stroke="#10107c" strokeWidth="3" />
    <ellipse cx="5.500" cy="21" rx="3.500" ry="7" fill="#1c1c9c" />
    <ellipse cx="26.500" cy="21" rx="3.500" ry="7" fill="#1c1c9c" />
  </svg>
);

const ChromeIcon = ({ a, b, c, d }: { a: string; b: string; c: string; d: string }) => (
  <svg width="30" height="30" viewBox="0 0 30 30">
    <circle cx="15" cy="15" r="14" fill={b} />
    <path d="M15 15L2.900 8A14 14 0 0 1 27.500 9H15Z" fill={a} />
    <path d="M15 15L27.500 9A14 14 0 0 1 14 29L20 18Z" fill={c} />
    <circle cx="15" cy="15" r="6.400" fill="#f4f4f4" />
    <circle cx="15" cy="15" r="5" fill={d} />
  </svg>
);

const Task = ({ children, stack, active, className = "" }: Child & { stack?: boolean; active?: boolean; className?: string }) => (
  <div className={"flex h-[39px] shrink-0 " + className}>
    <div
      className={
        "flex h-[39px] items-center justify-center rounded-[3px] border border-[#6c5e70] shadow-[inset_0_0_0_1px_#f0e4f2] " +
        (stack ? "w-[52px] pr-px " : "w-[60px] ") +
        (active ? "bg-gradient-to-b from-[#f4eef6] to-[#dccfe0]" : "bg-gradient-to-b from-[#dccce0] via-[#c4b0c8] to-[#d0bcd4]")
      }
    >
      {children}
    </div>
    {stack && (
      <>
        <div className="h-[39px] w-[4px] rounded-r-[3px] border-r border-[#7c6e80] bg-[#d6c6da]" />
        <div className="h-[39px] w-[4px] rounded-r-[3px] border-r border-[#8c7e90] bg-[#cdbdd1]" />
      </>
    )}
  </div>
);

function Taskbar() {
  return (
    <div className="flex h-[40px] items-center border-t border-[#4c404e] bg-[linear-gradient(90deg,#8d7e90_0px,#b09cb2_60px,#c8b2ca_130px,#c8b2ca_1640px,#9a8a9c_1690px,#9a8a9c_1920px)] font-['Open_Sans',sans-serif]">
      <svg className="ml-[8px] shrink-0" width="38" height="38" viewBox="0 0 38 38">
        <defs>
          <radialGradient id="orb" cx=".5" cy=".75" r=".7">
            <stop offset="0" stopColor="#5fc8e8" />
            <stop offset=".55" stopColor="#1c6294" />
            <stop offset="1" stopColor="#153a62" />
          </radialGradient>
        </defs>
        <circle cx="19" cy="19" r="18" fill="url(#orb)" stroke="#2a4a68" />
        <path d="M4 12A17 17 0 0 1 34 12Q19 20 4 14Z" fill="#fff" opacity=".28" />
        <path d="M10 12Q14 9 18 11L17 18Q13 16 9 18.500Z" fill="#f0602c" />
        <path d="M19.500 11.500Q24 14 29 11L27.500 18Q23 21 18.500 18.500Z" fill="#8cc63c" />
        <path d="M8.700 20Q13 17.500 16.800 19.500L15.800 26.500Q12 24.500 7.500 27Z" fill="#48a8e8" />
        <path d="M18.300 20.500Q23 22.500 27.300 20L26 27Q21 30 17.200 27.500Z" fill="#fcc828" />
      </svg>
      <svg className="mr-px ml-[27px] shrink-0" width="32" height="30" viewBox="0 0 32 30">
        <path d="M1 8L8 5V22L3 25Z" fill="#c8ccc8" stroke="#888" />
        <path d="M9 2L31 4L29 20L8 17Z" fill="#e4e6e4" stroke="#888" />
        <path d="M11 4L29 6L27.500 17.500L10 15Z" fill="#0c2a10" />
        <path d="M11 13L14 7L16 14L18 8L20 14L22 9L24 15L27 10" fill="none" stroke="#2cc83c" strokeWidth="1.500" />
        <ellipse cx="21" cy="25.500" rx="8" ry="3" fill="#e8e8e8" stroke="#aaa" />
        <path d="M16 19H21V24H16Z" fill="#ccc" />
      </svg>
      <Task stack className="ml-[15px]">
        <svg width="34" height="32" viewBox="0 0 34 32">
          <path d="M2 4L12 2L14 6H30V26H2Z" fill="#f0d878" stroke="#c8a848" />
          <path d="M5 2H9V6H5Z" fill="#3ab03a" />
          <path d="M12 4H20V7H12Z" fill="#e04030" />
          <path d="M22 5H29V8H22Z" fill="#5098e0" />
          <path d="M1 9H33V28H1Z" fill="#f8e8a0" stroke="#d0b458" />
          <path d="M6 31V20Q6 17 9 17H26Q29 17 29 20V31H24V22H11V31Z" fill="#8cc8e8" stroke="#5898c0" />
        </svg>
      </Task>
      <Task className="ml-[2px]"><ChromeIcon a="#dd4a3c" b="#35a050" c="#fcd03c" d="#3c78d8" /></Task>
      <Task className="ml-[2px]">
        <svg width="32" height="32" viewBox="0 0 32 32">
          <path d="M2 2H23L26 6V31H2Z" fill="#fafafa" stroke="#777" />
          <path d="M3 20H25V30H3Z" fill="#5cc828" />
          <path d="M3 16H25V20H3Z" fill="#c4eeb0" />
          <path d="M4 3H22" stroke="#888" strokeDasharray="1 1" strokeWidth="2" />
          <path d="M8 20V10H11V18M12.500 14.500H16.500M14.500 12.500V16.500M17 14.500H21M19 12.500V16.500" fill="none" stroke="#111" strokeWidth="1.300" />
          <path d="M28 1L32 3L21 25L17 28L17.500 23Z" fill="#f0a830" stroke="#9a6010" strokeWidth=".8" />
        </svg>
      </Task>
      <div className="flex w-[64px] justify-center"><ChromeIcon a="#c8900c" b="#e8b428" c="#fcd050" d="#d8a420" /></div>
      <Task stack>
        <svg width="28" height="32" viewBox="0 0 28 32">
          <path d="M14 1L27 7V22L14 30L1 22V7Z" fill="#5c7c98" />
          <path d="M14 1L27 7L14 13L1 7Z" fill="#b8ccdc" stroke="#54708c" />
          <path d="M14 4L20 7L14 10L8 7Z" fill="#28486c" />
          <path d="M2 9L13 14.500V28L2 21.500Z" fill="#dde8f0" />
          <path d="M26 9L15 14.500V28L26 21.500Z" fill="#b8c8d8" />
          <path d="M4 12L11 16V18L4 14.500ZM4 17L11 20.500V24L4 20ZM24 12L17 16V18L24 14.500ZM24 17L17 20.500V24L24 20Z" fill="#28486c" />
        </svg>
      </Task>
      <Task className="ml-[2px]">
        <svg width="32" height="32" viewBox="0 0 32 32">
          <rect x="1" y="1" width="30" height="30" fill="#b40404" stroke="#800" strokeDasharray="3 2" strokeWidth="2" />
          <path d="M8 24L12 6H22M10 15H18M17 15H25L16 26H25" fill="none" stroke="#fff" strokeWidth="3.500" />
        </svg>
      </Task>
      <Task className="ml-[2px]">
        <div className="flex h-[27px] w-[29px] items-center justify-center border-2 border-[#7cb8f4] bg-[#241c60] pb-[2px] text-[16px] leading-[20px] font-bold text-[#8cc4fc]">Ps</div>
      </Task>
      <Task className="ml-[2px]">
        <svg width="32" height="30" viewBox="0 0 32 30">
          <path d="M11 3L27 4L31 25L26 28Z" fill="#c8a858" stroke="#907030" />
          <path d="M10 2L27 4L19 27L1 20Z" fill="#84c4d4" stroke="#5c98a8" />
          <path d="M10 2L27 4L25 8L9 5Z" fill="#c8e8ee" />
          <path d="M11 2L27 3.500" stroke="#888" strokeWidth="3" strokeDasharray="1.500 1" />
          <path d="M27 5L20 27L25 29L30 25Z" fill="#f0f0f0" stroke="#999" />
        </svg>
      </Task>
      <Task className="ml-[2px]">
        <div className="h-[25px] w-[30px] border border-t-[3px] border-[#777] border-t-[#a8b8c4] bg-black pt-[2px] pl-[2px] font-['Liberation_Mono',monospace] text-[9px] leading-[9px] tracking-[-0.500px] text-white">C:\_</div>
      </Task>
      <Task stack active className="ml-[2px]"><Audacity size={31} /></Task>
      <Task className="ml-[43px]">
        <svg width="32" height="32" viewBox="0 0 32 32" shapeRendering="crispEdges">
          <path d="M14 1H28V13H14Z" fill="#ddd" stroke="#222" />
          <path d="M16 3H26V11H16Z" fill="#0000e0" />
          <path d="M13 14H28L31 11V16L28 18H13Z" fill="#ccc" stroke="#222" />
          <path d="M3 15H17V27H3Z" fill="#ddd" stroke="#222" />
          <path d="M5 17H15V25H5Z" fill="#0000e0" />
          <path d="M1 28H17L20 25V29L17 31H1Z" fill="#ccc" stroke="#222" />
          <path d="M23 5L10 15H15L8 23L22 14H17Z" fill="#ffff00" stroke="#444" strokeWidth=".6" />
        </svg>
      </Task>
      <div className="ml-auto flex items-center">
        <svg width="9" height="5"><path d="M0 5H9L4.500 0Z" fill="#fff" stroke="#444" strokeWidth=".5" /></svg>
        <svg className="ml-[11px]" width="18" height="17" viewBox="0 0 18 17">
          <path d="M2 1V16" stroke="#fff" strokeWidth="2" />
          <path d="M3 1H10V3H16V10H9V8H3Z" fill="#fff" stroke="#555" strokeWidth=".6" />
          <path d="M11.500 6L17 16H6Z" fill="#f8c810" stroke="#8a6a00" strokeWidth=".8" />
          <path d="M11.500 9V13M11.500 14V15" stroke="#222" strokeWidth="1.300" />
        </svg>
        <svg className="ml-[10px]" width="11" height="16" viewBox="0 0 11 16">
          <rect x=".5" y="1.500" width="10" height="14" rx="2" fill="#444" />
          <rect x="1.500" y="2.500" width="8" height="12" rx="1" fill="none" stroke="#fff" strokeWidth="1.400" />
          <path d="M4 0H7V2H4ZM3.500 6H7.500V12.500H3.500Z" fill="#fff" />
        </svg>
        <svg className="ml-[10px]" width="16" height="14" viewBox="0 0 16 14">
          <path d="M0 11H2.500V14H0ZM3.500 9H6V14H3.500ZM7 6H9.500V14H7ZM10.500 3H13V14H10.500ZM13.500 0H16V14H13.500Z" fill="#fff" stroke="#444" strokeWidth=".5" />
        </svg>
        <svg className="ml-[8px]" width="16" height="15" viewBox="0 0 16 15">
          <path d="M1 5H3L7 1V14L3 10H1Z" fill="#fff" stroke="#444" strokeWidth=".5" />
          <path d="M9 5Q10.500 7.500 9 10M11 3Q13.500 7.500 11 12M13 1.500Q17 7.500 13 13.500" fill="none" stroke="#fff" />
        </svg>
        <svg className="ml-[8px]" width="16" height="17" viewBox="0 0 16 17">
          <path d="M4.500 0L8 3L3.500 6L0 3ZM11.500 0L16 3L12.500 6L8 3ZM0 9L3.500 6L8 9L4.500 12ZM12.500 6L16 9L11.500 12L8 9ZM4 12.500L8 10L12 12.500L8 15ZM8 3L12.500 6L8 9L3.500 6Z" fill="#8cccf8" stroke="#2a78c0" strokeWidth=".5" />
          <circle cx="12" cy="12.500" r="4" fill="#30a040" stroke="#fff" strokeWidth=".6" />
          <path d="M10 12.500L11.500 14L14 11" fill="none" stroke="#fff" strokeWidth="1.200" />
        </svg>
        <div className="w-[83px] pl-[6px] text-center text-[12px] leading-[17px] tracking-[-0.450px] text-white">
          <div>22:30</div>
          <div>13.03.2013</div>
        </div>
        <div className="h-[39px] w-[15px] border border-[#b8a8bc] bg-gradient-to-b from-[#b4a6b8] via-[#83748a] to-[#b29fb6]" />
      </div>
    </div>
  );
}

export default function App() {
  return (
    <div className="h-[1080px] w-[1920px] overflow-hidden bg-[#f0f0f0]">
      <div className="flex h-[22px] items-center border-b border-[#2c242c] bg-[linear-gradient(90deg,#8c8090_0px,#a396a8_40px,#85788a_90px,#6a5c70_140px,#5b4b60_185px,#b898bc_208px,#c4a6c8_230px,#c0a2c4_380px,#1c141c_402px,#60506a_412px,#5c4c64_428px,#0c070c_442px,#0a060a_955px,#5f4862_972px,#755c7a_1030px,#55425a_1120px,#4d3c52_1240px,#1e171e_1262px,#140f14_1730px,#5d4f5e_1790px,#a090a2_1815px,#b4a4b6_1920px)] shadow-[inset_0_-1px_0_#a694a8] font-['Noto_Sans',sans-serif]">
        <div className="mr-[5px] ml-px"><Audacity size={15} /></div>
        <span className="text-[12px] tracking-[-0.350px] text-black [text-shadow:0_0_4px_#fff]">eeds2</span>
        <div className="mr-[3px] ml-auto flex h-[19px] self-start overflow-hidden rounded-b-[4px] border border-t-0 border-[#3c303c] shadow-[0_0_1px_#eee]">
          <div className="flex w-[28px] items-center justify-center border-r border-[#554858] bg-gradient-to-b from-[#b8a9bb] to-[#85778a]">
            <div className="mt-[3px] h-[4px] w-[12px] rounded-[1px] border border-[#555] bg-white" />
          </div>
          <div className="flex w-[27px] items-center justify-center border-r border-[#554858] bg-gradient-to-b from-[#b8a9bb] to-[#85778a] pr-[3px]">
            <svg width="13" height="13"><path d="M3.500 1H12V8.500" fill="none" stroke="#fff" strokeWidth="1.500" /><path d="M2 4H9V11H2Z" fill="none" stroke="#fff" strokeWidth="2.200" /><path d="M4.500 6.500H6.500V8.500H4.500Z" stroke="#555" strokeWidth=".7" fill="none" /></svg>
          </div>
          <div className="flex w-[46px] items-center justify-center bg-gradient-to-b from-[#dc9a90] via-[#c8402c] to-[#d0503c] pb-[2px]">
            <svg width="12" height="11"><path d="M2 1.500L10 9.500M10 1.500L2 9.500" stroke="#444" strokeWidth="4" /><path d="M2 1.500L10 9.500M10 1.500L2 9.500" stroke="#fff" strokeWidth="2.600" /></svg>
          </div>
        </div>
      </div>
      <div className="flex h-[19px] items-center border-b border-[#b4bccc] bg-[linear-gradient(#ffffff_0%,#f0f3fa_35%,#d6dcf0_36%,#dfe5f5_100%)] pt-[2px] pl-[7px] font-['Noto_Sans',sans-serif] text-[12px] leading-[16px] tracking-[-0.350px] text-black">
        {menus.map(([m, w]) => (
          <div key={m} className={"shrink-0 whitespace-nowrap " + w}>
            <span className="underline underline-offset-2">{m[0]}</span>
            {m.slice(1)}
          </div>
        ))}
      </div>
      <div className="h-px bg-[#f4f4f4]" />
      <Toolbars />
      <div className="h-px bg-white" />
      <TimeRuler />
      <Tracks />
      <div className="flex h-[17px] items-center border-t border-white bg-[#ececec] pl-[141px]">
        <svg width="5" height="8"><path d="M4 0V8L0 4Z" fill="#333" /></svg>
        <div className="ml-auto h-[15px] w-[15px] rounded-[2px] border border-[#979797] bg-gradient-to-b from-[#f4f4f4] to-[#c8c8cc]" />
        <svg className="mr-[22px] ml-[155px]" width="5" height="8"><path d="M0 0V8L4 4Z" fill="#333" /></svg>
      </div>
      <SelectionBar />
      <Taskbar />
    </div>
  );
}
